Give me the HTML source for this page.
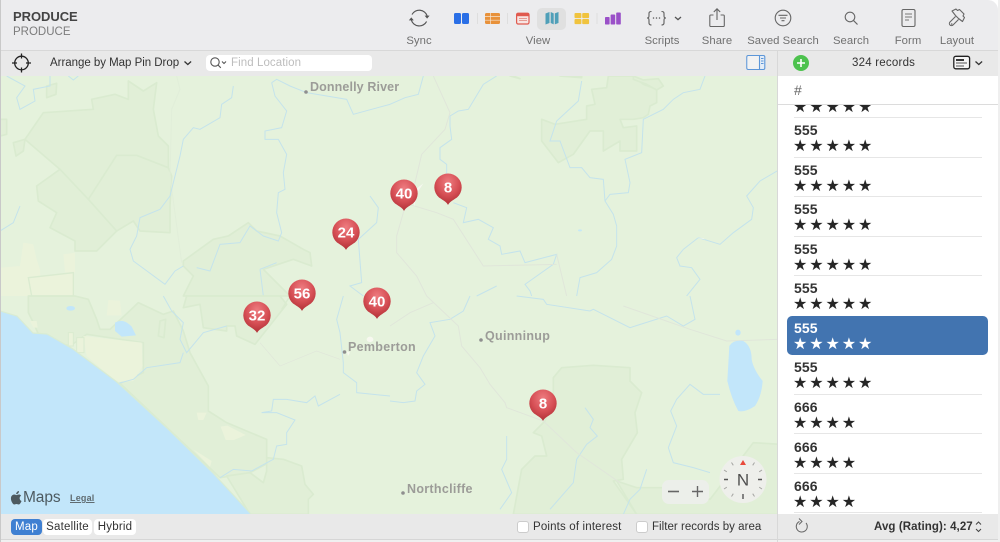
<!DOCTYPE html>
<html><head><meta charset="utf-8">
<style>
html,body{margin:0;padding:0;width:1000px;height:542px;overflow:hidden;background:#fff;font-family:"Liberation Sans",sans-serif}
.a{position:absolute}
.t{position:absolute;white-space:nowrap;line-height:14px}
.lb{font-size:11.3px;color:#707070;letter-spacing:.05px;transform:translateX(-50%);top:34px}
.pl{font-size:12.5px;font-weight:bold;color:#9c9c98;letter-spacing:.3px}
.n{font-size:14px;font-weight:bold;color:#333;left:794px;letter-spacing:.1px}
.s{font-family:"DejaVu Sans",sans-serif;font-size:16px;color:#262626;left:793px;letter-spacing:1.9px;line-height:16px}
.sep{position:absolute;left:794px;width:188px;height:1px;background:#e6e6e6}
.pt{font-size:15px;font-weight:bold;fill:#fff;text-anchor:middle;font-family:"Liberation Sans",sans-serif}
</style></head><body>
<div class="a" style="left:0;top:0;width:998px;height:542px;background:#ececee;border-top-right-radius:10px;overflow:hidden">
<div class="a" style="left:0;top:0;width:1px;height:542px;background:#c9c9c9;z-index:9"></div>
<div class="a" style="left:0;top:50px;width:998px;height:26px;background:#e9e9e9;border-top:1px solid #d8d8d8;box-sizing:border-box"></div>
<div class="a" style="left:0;top:514px;width:998px;height:25px;background:#e9e9e9"></div>
<div class="a" style="left:0;top:539px;width:998px;height:1px;background:#d6d6d6"></div>
<div class="a" style="left:0;top:540px;width:998px;height:2px;background:#f0f0f0"></div>
</div>
<div class="a" style="left:998px;top:0;width:2px;height:542px;background:#efefef"></div>

<div class="t" style="left:13px;top:10px;font-size:13px;font-weight:bold;color:#444;letter-spacing:-.05px">PRODUCE</div>
<div class="t" style="left:13px;top:25px;font-size:11.5px;color:#7c7c7c;letter-spacing:0">PRODUCE</div>

<div class="a" style="left:537px;top:8px;width:29px;height:22px;background:#e0e0e0;border-radius:5px"></div>

<svg class="a" style="left:0;top:0" width="1000" height="76" fill="none">
<!-- sync -->
<path d="M412 14.5A8.3 8.3 0 0 1 427.2 16" stroke="#555" stroke-width="1.2"/>
<path d="M426.6 21.5A8.3 8.3 0 0 1 411.3 20" stroke="#555" stroke-width="1.2"/>
<path d="M424.6 15.6h5l-2.5 3zM408.8 20.4h5l-2.5-3z" fill="#555"/>
<!-- blue -->
<rect x="454" y="13" width="7" height="11" rx="1.5" fill="#2a6fe6"/><rect x="462" y="13" width="7" height="11" rx="1.5" fill="#2a6fe6"/>
<!-- divs -->
<path d="M477.5 13v11M507.5 13v11M597 13v11" stroke="#dedede"/>
<!-- table -->
<rect x="485" y="13" width="15" height="11" rx="1.5" fill="#e8913a"/>
<path d="M485 16.6h15M485 20.2h15M490.5 13v11" stroke="#f6e5d2" stroke-width=".7"/>
<!-- calendar -->
<rect x="516.6" y="13.2" width="12.4" height="10.8" rx="1.5" fill="#f7e4e2" stroke="#e05a4f" stroke-width="1.2"/>
<rect x="516.6" y="13.2" width="12.4" height="3" fill="#e05a4f"/>
<path d="M519 18.5h8M519 20.5h8" stroke="#e59a92" stroke-width=".9"/>
<!-- map -->
<path d="M545.5 13.5l4 -1.5v11l-4 1.5zM550.7 12l3 1.4v11l-3-1.4zM554.8 13.4l3.7-1.4v11l-3.700 1.400z" fill="#4f9fb8"/>
<!-- grid -->
<rect x="574.5" y="13" width="6.9" height="5.100" rx="1" fill="#f0c33e"/><rect x="582.2" y="13" width="6.900" height="5.100" rx="1" fill="#f0c33e"/>
<rect x="574.5" y="19" width="6.9" height="5.100" rx="1" fill="#f0c33e"/><rect x="582.2" y="19" width="6.900" height="5.100" rx="1" fill="#f0c33e"/>
<!-- bars -->
<rect x="605" y="17" width="4.6" height="7.5" rx=".8" fill="#9a50c8"/><rect x="610.6" y="14.5" width="4.6" height="10" rx=".8" fill="#9a50c8"/><rect x="616.2" y="12.5" width="4.6" height="12" rx=".8" fill="#9a50c8"/>
<!-- scripts -->
<path d="M651.5 11.5c-3 0-2.500 1.500-2.500 3.500s0 3-2 3c2 0 2 1 2 3s-.5 4 2.500 4M661.500 11.500c3 0 2.500 1.500 2.500 3.500s0 3 2 3c-2 0-2 1-2 3s.5 4-2.500 4" stroke="#5c5c5c" stroke-width="1.100"/>
<path d="M653.500 18h.01M656.500 18h.01M659.500 18h.01" stroke="#5c5c5c" stroke-width="1.500" stroke-linecap="round"/>
<path d="M675 17l3 2.600 3-2.600" stroke="#555" stroke-width="1.300"/>
<!-- share -->
<path d="M713.500 15h-2.700a1 1 0 0 0-1 1v9.500a1 1 0 0 0 1 1h12.500a1 1 0 0 0 1-1V16a1 1 0 0 0-1-1h-2.700M717 20V9M713.800 12l3.200-3.200 3.200 3.200" stroke="#666" stroke-width="1.100"/>
<!-- saved search -->
<circle cx="783" cy="18" r="7.800" stroke="#666" stroke-width="1.100"/>
<path d="M778.500 15.300h9M780 18h6M781.500 20.700h3" stroke="#666" stroke-width="1.100"/>
<!-- search -->
<circle cx="850" cy="17" r="4.800" stroke="#666" stroke-width="1.100"/>
<path d="M853.500 20.500l4 4" stroke="#666" stroke-width="1.200"/>
<!-- form -->
<rect x="902" y="9.500" width="13" height="17" rx="1.500" stroke="#666" stroke-width="1.100"/>
<path d="M905 14h7M905 17h7M905 20h4" stroke="#777" stroke-width="1"/>
<!-- layout brush -->
<path d="M952 11l4-2 1.500 1.500 2-1 4.500 4.500-1 2 1.500 1.500-2 4-4-3-3-3zM955.500 16.500l-5.500 5.500a2 2 0 0 0 3 3l5.500-5.500" stroke="#666" stroke-width="1.100" stroke-linejoin="round"/>
<circle cx="951.700" cy="24" r=".8" fill="#666"/>
<!-- crosshair -->
<circle cx="21.500" cy="63" r="6.800" stroke="#222" stroke-width="1.300"/>
<path d="M21.500 53.500v5M21.500 67.500v5M12 63h5M26 63h5" stroke="#222" stroke-width="1.300"/>
<!-- arrange chevron -->
<path d="M184.500 61.500l3.300 3 3.300-3" stroke="#333" stroke-width="1.300"/>
<!-- search field -->
<rect x="206" y="55" width="166" height="16" rx="4" fill="#fff"/>
<circle cx="215" cy="62" r="4.200" stroke="#555" stroke-width="1.100"/>
<path d="M218 65l2.800 2.800M222 61.500l2 2 2-2" stroke="#555" stroke-width="1.100"/>
<!-- sidebar toggle -->
<rect x="746.800" y="55.500" width="18" height="14" rx="1.500" fill="#e4edf7" stroke="#5c96d8" stroke-width="1.100"/>
<rect x="747.400" y="56" width="12" height="13" rx="1" fill="#f2f2f2"/>
<path d="M759.500 55.500v14" stroke="#5c96d8" stroke-width="1.100"/>
<path d="M761 58.500h2.500M761 61h2.500M761 63.500h2.500" stroke="#5c96d8"/>
<!-- green plus -->
<circle cx="801" cy="63" r="8" fill="#4dc24e"/>
<path d="M797 63h8M801 59v8" stroke="#fff" stroke-width="1.600"/>
<!-- view icon -->
<rect x="953.800" y="56.300" width="15.800" height="12.500" rx="2" fill="#f6f6f6" stroke="#222" stroke-width="1.300"/>
<path d="M956 60h8" stroke="#222" stroke-width="1.800"/><path d="M956 63h11M956 66h8" stroke="#777" stroke-width="1.300"/>
<path d="M975.500 61.500l3.300 3 3.300-3" stroke="#333" stroke-width="1.300"/>
<path d="M777.500 50v26" stroke="#d8d8d8"/>
</svg>

<div class="t lb" style="left:419px">Sync</div>
<div class="t lb" style="left:538px">View</div>
<div class="t lb" style="left:662px">Scripts</div>
<div class="t lb" style="left:717px">Share</div>
<div class="t lb" style="left:783px">Saved Search</div>
<div class="t lb" style="left:851px">Search</div>
<div class="t lb" style="left:908px">Form</div>
<div class="t lb" style="left:957px">Layout</div>

<div class="t" style="left:50px;top:56px;font-size:11.500px;color:#333;letter-spacing:-.03px">Arrange by Map Pin Drop</div>
<div class="t" style="left:231px;top:56px;font-size:11.500px;color:#bdbdbd;letter-spacing:.08px">Find Location</div>
<div class="t" style="left:852px;top:56px;font-size:11.500px;color:#333;letter-spacing:.22px">324 records</div>

<!-- MAP -->
<svg class="a" style="left:1px;top:76px" width="776" height="438" viewBox="1 76 776 438" fill="none">
<rect x="0" y="76" width="780" height="440" fill="#e5f2dc"/>
<!-- tile 1 -->
<g transform="translate(0,76) scale(.33333)">
<g fill="#e1efd7" stroke="#daebd0" stroke-width="5" stroke-linejoin="round">
<path d="M75 190L130 110 280 100 275 70 345 55 385 70 385 15 430 45 470 20 460 100 475 180 505 210 505 275 515 300 510 390 510 470 420 465 400 435 350 465 290 525 225 525 225 495 150 455 170 410 115 375 110 330 180 280z"/>
<path d="M40 200L75 190 70 225 48 240zM0 130L20 130 20 175 0 180zM140 30L170 22 168 55 140 65z"/>
<path d="M550 570L550 555 640 490 685 480 745 440 770 465 840 480 910 520 930 530 935 570 880 550 790 580 820 610 870 660 550 660 580 600z"/>
</g>
<path d="M180 280L265 370 350 238 410 238 505 275M265 370L350 465" stroke="#daebd0" stroke-width="5"/>
<path d="M515 100L540 40 530 0M515 100L510 300 545 560" stroke="#e1eed9" stroke-width="3"/>
<g fill="#ebf3db">
<path d="M0 575L60 570 70 500 100 505 110 550 120 580 125 660 0 660z"/>
<path d="M190 535L225 530 225 590 195 590z"/>
<path d="M85 605L220 590 220 660 95 660z" stroke="#daebd0" stroke-width="4"/>
</g>
<g stroke="#c4e3ec" stroke-width="3">
<path d="M700 30L695 65 665 85 660 125 600 160 580 155 550 190 540 240 525 300 510 360 480 400 420 425 410 480 390 520 400 555 495 625 525 585 550 570"/>
<path d="M815 20L830 10 870 30 920 50 1040 70 1060 115 1170 85"/>
<path d="M815 20L825 60 860 105 845 155 795 165 795 190 835 190 860 235 850 290 855 340 835 350 830 410 845 470 835 495 790 480 750 450 720 500 660 505 630 585 590 575"/>
<path d="M1110 360L1135 395 1130 440 1075 490 1085 620 1050 630 1090 660"/>
<path d="M60 390L40 440 0 465M20 0L75 30 50 65 60 100 105 75 100 40 150 30 150 0M205 0L220 12 235 0"/>
<path d="M780 580L830 560M780 580L790 660"/>
</g>
</g>
<!-- tile 2 -->
<g transform="translate(390,76) scale(.33333)">
<g fill="#e1efd7" stroke="#daebd0" stroke-width="5" stroke-linejoin="round">
<path d="M455 130L495 145 590 130 590 90 615 85 605 40 650 35 655 0 730 0 760 25 800 40 800 80 780 90 775 115 760 125 730 130 690 130 700 155 740 150 740 225 710 225 690 225 690 195 640 225 640 165 600 165 550 235 505 260 455 195z"/>
<path d="M360 0L390 8 370 0zM510 0L575 5 575 0zM730 0L760 12 805 8 820 30 800 42 770 25 730 10z"/>
</g>
<g stroke="#c4e3ec" stroke-width="3">
<path d="M100 0L85 55 45 65 0 85"/>
<path d="M320 0L280 25 235 100 205 105 180 120 180 150 185 190 150 215 150 250 170 265 170 300"/>
<path d="M190 380L230 395 220 440 265 430 310 455 295 490 330 510 335 535 390 525 405 560 500 535 490 565 405 625 420 645 425 660M320 630L260 660"/>
<path d="M575 15L565 75 500 135 480 195 510 195 540 275 575 275 600 305 640 310 645 375 670 415 680 450 680 510 665 550 620 590 570 605 560 660"/>
<path d="M945 0L930 40 880 50 850 70 820 100 760 130 755 230 705 250 720 320 715 350 660 355 645 375"/>
<path d="M1170 280L1110 315 1070 360 1090 395 1085 430 1030 470 990 505 925 485 880 520 860 545 870 570 905 575 930 610 890 660"/>
</g>
<path d="M130 0L180 110 165 160 95 235 75 320 40 410 20 480 20 530 80 600 110 660M40 380L140 410 190 430 280 570 500 565M500 535L530 660" stroke="#e0e6da" stroke-width="3"/>
<ellipse cx="570" cy="463" rx="6" ry="3" fill="#c6e8f6"/>
<path d="M920 485l25 5-5-3zM100 322L70 345 72 392 85 345z" fill="#f6f8f1"/>
</g>
<!-- tile 3 -->
<g transform="translate(0,296) scale(.33333)">
<g fill="#e1efd7" stroke="#daebd0" stroke-width="5" stroke-linejoin="round">
<path d="M85 0L225 0 265 10 290 70 300 100 330 100 415 20 490 55 520 45 550 105 570 170 625 270 625 345 680 380 800 430 800 485 825 490 750 530 660 545 360 262 430 230 430 140 260 115 210 150 120 125 100 80 85 50z"/>
<path d="M800 485L850 490 905 510 915 565 940 595 925 610 925 655 750 655 680 540 750 530 790 560 800 525z"/>
<path d="M550 35L600 25 610 95 680 105 680 90 705 90 710 120 765 145 860 25 840 0 560 0z"/>
<path d="M480 75L497 70 492 125 475 120z"/>
</g>
<path d="M870 0L845 40" stroke="#daebd0" stroke-width="4"/>
<path d="M250 120L425 140 428 210 400 255 350 258 260 180z" fill="#ebf3db"/>
<path d="M90 75l20 0 3 20-13 0zM325 12l35 2 5 45-45 0zM590 350h30l-10 22-15 0zM662 392l20-3 55 28-35 15-25 0zM580 460l55 35-5 18z" fill="#ebf3db"/>
<path d="M205 110h15v40h-15zM230 125h22v45h-22z" fill="#ebf3db" stroke="#daebd0" stroke-width="3"/>
<path d="M345 80Q370 65 395 92 L408 118 365 122 345 105z" fill="#c2e6fa"/>
<ellipse cx="212" cy="37" rx="13" ry="7" fill="#c2e6fa"/>
<g stroke="#c4e3ec" stroke-width="3">
<path d="M490 0L515 45 550 80 540 130 560 170 610 110 680 90"/>
<path d="M550 170L540 200 440 215 400 250 355 262"/>
<path d="M1030 0L1010 70 1020 110 1030 200 1030 230 1070 260 1070 290 1170 300"/>
<path d="M785 350L815 345 820 310 860 310 920 320 945 300 955 330 1020 295"/>
<path d="M785 350L830 350 885 372 860 410 860 445 830 450 820 490 755 525 700 520 660 545"/>
</g>
<path d="M780 140L840 210 950 165 1020 190" stroke="#e0e6da" stroke-width="2"/>
<ellipse cx="1110" cy="130" rx="10" ry="8" fill="#f7f8f0"/>
<path d="M1040 165l10 5-6 10z" fill="#f7f8f0"/>
</g>
<!-- tile 4 -->
<g transform="translate(390,296) scale(.33333)">
<g fill="#e1efd7" stroke="#daebd0" stroke-width="5" stroke-linejoin="round">
<path d="M490 245L515 215 610 208 720 215 720 255 755 290 735 350 742 410 695 490 700 550 670 555 740 655 370 655 395 520 435 480 470 480 455 420 430 410 465 375 490 310z"/>
<path d="M680 555L740 575 830 575 880 590 960 610 1090 440 1170 445 1170 655 740 655z"/>
</g>
<g stroke="#c4e3ec" stroke-width="3">
<path d="M240 0L220 45 180 70 120 80 135 120 100 180 80 230 105 265 80 285 75 315 40 320 0 315"/>
<path d="M380 0L460 10 470 25 600 45 610 40 720 95 830 60 880 90 915 70 900 0"/>
<path d="M350 420L350 490 335 520 365 590 330 640"/>
<path d="M585 335L610 370 600 395 622 420 590 445 560 490 550 560 480 640"/>
<path d="M990 295L940 295 900 265 860 310 842 345 860 390 835 455 850 500 910 515 960 530"/>
<path d="M770 520L750 580 720 610 700 655"/>
</g>
<path d="M110 0L205 90 215 150 270 215 300 265 345 320 350 335 460 375 560 470 690 560M0 90L60 50 130 20M700 30L900 100 1010 135 1170 130" stroke="#e0e6da" stroke-width="3"/>
<ellipse cx="1044" cy="110" rx="8" ry="9" fill="#c2e6fa"/>
<path d="M1018 150Q1030 130 1060 135 1085 150 1085 190 1090 220 1118 255 1115 300 1095 330 1065 350 1045 345 1025 310 1012 255 1030 200z" fill="#c2e6fa"/>
</g>
<!-- sea -->
<path d="M0 311L17 316 33 333 47 334 73 349 117 382 167 428 213 473 251 514 0 514z" fill="#c2e6fa"/>
<path d="M0 311L17 316 33 333 47 334 73 349 117 382 167 428 213 473 251 514" stroke="#d9ecd3" stroke-width="1.200"/>
<!-- place dots -->
<g fill="#8f8f8f"><circle cx="306" cy="92" r="1.800"/><circle cx="344.500" cy="352" r="1.800"/><circle cx="481" cy="340" r="1.800"/><circle cx="403" cy="493" r="1.800"/></g>
<!-- pins -->
<defs>
<radialGradient id="pg" cx=".5" cy=".28" r=".75"><stop offset="0" stop-color="#ee7c80"/><stop offset=".55" stop-color="#d64f55"/><stop offset="1" stop-color="#ab2c32"/></radialGradient>
</defs>
<g id="pins">
<g transform="translate(404,193)"><path d="M0 18C-1 15.500-4 13.800-9 10.500A13.700 13.700 0 1 1 9 10.500C4 13.800 1 15.500 0 18Z" fill="url(#pg)"/><text class="pt" y="5.500">40</text></g>
<g transform="translate(448,187)"><path d="M0 18C-1 15.500-4 13.800-9 10.500A13.700 13.700 0 1 1 9 10.500C4 13.800 1 15.500 0 18Z" fill="url(#pg)"/><text class="pt" y="5.500">8</text></g>
<g transform="translate(346,232)"><path d="M0 18C-1 15.500-4 13.800-9 10.500A13.700 13.700 0 1 1 9 10.500C4 13.800 1 15.500 0 18Z" fill="url(#pg)"/><text class="pt" y="5.500">24</text></g>
<g transform="translate(302,293)"><path d="M0 18C-1 15.500-4 13.800-9 10.500A13.700 13.700 0 1 1 9 10.500C4 13.800 1 15.500 0 18Z" fill="url(#pg)"/><text class="pt" y="5.500">56</text></g>
<g transform="translate(257,315)"><path d="M0 18C-1 15.500-4 13.800-9 10.500A13.700 13.700 0 1 1 9 10.500C4 13.800 1 15.500 0 18Z" fill="url(#pg)"/><text class="pt" y="5.500">32</text></g>
<g transform="translate(377,301)"><path d="M0 18C-1 15.500-4 13.800-9 10.500A13.700 13.700 0 1 1 9 10.500C4 13.800 1 15.500 0 18Z" fill="url(#pg)"/><text class="pt" y="5.500">40</text></g>
<g transform="translate(543,403)"><path d="M0 18C-1 15.500-4 13.800-9 10.500A13.700 13.700 0 1 1 9 10.500C4 13.800 1 15.500 0 18Z" fill="url(#pg)"/><text class="pt" y="5.500">8</text></g>
</g>
<!-- apple logo -->
<path d="M17.300 492.500c.9-1 1-2 .9-2.800-.9.100-1.900.6-2.500 1.300-.6.700-1 1.600-.9 2.500 1 .1 1.900-.4 2.500-1zM18.200 494c-1.300-.1-2.400.7-3 .7-.7 0-1.600-.7-2.700-.7-1.400 0-2.700.8-3.400 2-1.400 2.500-.4 6.200 1 8.200.7 1 1.500 2.100 2.500 2 1-.1 1.400-.6 2.600-.6s1.500.6 2.600.6 1.800-1 2.400-2c.8-1.100 1.100-2.200 1.100-2.300-1.200-.5-2.300-1.800-2.300-3.400 0-1.400.8-2.600 1.800-3.200-.9-1.200-2-1.300-2.600-1.300z" fill="#4d5a60" transform="translate(11,491) scale(.82) translate(-8.500,-489.700)"/>
<!-- zoom control -->
<rect x="662" y="480" width="47" height="24" rx="7" fill="#ecefea"/>
<path d="M668 491.500h11" stroke="#666" stroke-width="1.600"/>
<path d="M692 491.500h11M697.500 486v11" stroke="#666" stroke-width="1.400"/>
<!-- compass -->
<circle cx="743" cy="479.500" r="23.500" fill="#eeefeb"/>
<path d="M743 460l3 5h-6z" fill="#e8493b"/>
<g stroke="#a5a5a2" stroke-width="1">
<path d="M754.500 462.500l-1.800 2.800M762 470l-2.800 1.800M762 489l-2.800-1.800M754.500 496.500l-1.800-2.800M731.500 496.500l1.800-2.800M724 489l2.800-1.800M724 470l2.800 1.800M731.500 462.500l1.800 2.800"/>
</g>
<path d="M724 479.500h4M758 479.500h4M743 494v5" stroke="#555" stroke-width="1.400"/>
<text x="743" y="485.500" font-family="Liberation Sans" font-size="17" fill="#4f4f4f" text-anchor="middle">N</text>
</svg>
<div class="t pl" style="left:310px;top:80px;letter-spacing:.12px">Donnelly River</div>
<div class="t pl" style="left:348px;top:340px">Pemberton</div>
<div class="t pl" style="left:485px;top:329px">Quinninup</div>
<div class="t pl" style="left:407px;top:482px">Northcliffe</div>
<div class="t" style="left:23px;top:488px;font-size:15.500px;line-height:20px;color:#4d5a60;letter-spacing:-.1px">Maps</div>
<div class="t" style="left:70px;top:491px;font-size:9px;font-weight:bold;color:#5f6b70;text-decoration:underline;letter-spacing:.2px">Legal</div>

<!-- list -->
<div class="a" style="left:778px;top:76px;width:220px;height:438px;background:#fff;overflow:hidden" id="listclip">
<div class="a" style="left:0;top:28px;width:220px;height:1px;background:#dcdcdc"></div>
</div>
<div class="a" style="left:777px;top:76px;width:1px;height:466px;background:#d8d8d8"></div>
<div class="t" style="left:794px;top:83px;font-size:14px;color:#666">#</div>
<div class="a" style="left:778px;top:105px;width:220px;height:408px;overflow:hidden">
  <div class="t s" style="left:15px;top:-6px">★★★★★</div>
</div>
<div class="sep" style="top:117px"></div>
<div class="t n" style="top:123px">555</div><div class="t s" style="top:138px">★★★★★</div><div class="sep" style="top:157px"></div>
<div class="t n" style="top:163px">555</div><div class="t s" style="top:178px">★★★★★</div><div class="sep" style="top:196px"></div>
<div class="t n" style="top:202px">555</div><div class="t s" style="top:217px">★★★★★</div><div class="sep" style="top:236px"></div>
<div class="t n" style="top:242px">555</div><div class="t s" style="top:257px">★★★★★</div><div class="sep" style="top:275px"></div>
<div class="t n" style="top:281px">555</div><div class="t s" style="top:296px">★★★★★</div>
<div class="a" style="left:787px;top:316px;width:201px;height:39px;background:#4274b0;border-radius:5px"></div>
<div class="t n" style="top:321px;color:#fff">555</div><div class="t s" style="top:336px;color:#fff">★★★★★</div>
<div class="t n" style="top:360px">555</div><div class="t s" style="top:375px">★★★★★</div><div class="sep" style="top:394px"></div>
<div class="t n" style="top:400px">666</div><div class="t s" style="top:415px">★★★★</div><div class="sep" style="top:433px"></div>
<div class="t n" style="top:440px">666</div><div class="t s" style="top:455px">★★★★</div><div class="sep" style="top:473px"></div>
<div class="t n" style="top:479px">666</div><div class="t s" style="top:494px">★★★★</div><div class="sep" style="top:512px"></div>

<!-- bottom bar -->
<div class="a" style="left:778px;top:514px;width:220px;height:25px;background:#e9e9e9"></div>
<div class="a" style="left:11px;top:519px;width:31px;height:16px;background:#3f80d2;border-radius:4px;color:#fff;font-size:11.500px;line-height:16px;text-align:center;letter-spacing:.2px">Map</div>
<div class="a" style="left:43px;top:519px;width:49px;height:16px;background:#fff;border-radius:4px;color:#333;font-size:11.500px;line-height:16px;text-align:center;letter-spacing:.2px">Satellite</div>
<div class="a" style="left:94px;top:519px;width:42px;height:16px;background:#fff;border-radius:4px;color:#333;font-size:11.500px;line-height:16px;text-align:center;letter-spacing:.2px">Hybrid</div>
<div class="a" style="left:517px;top:521px;width:12px;height:12px;background:#fff;border:1px solid #ccc;border-radius:3px;box-sizing:border-box"></div>
<div class="t" style="left:533px;top:520px;font-size:11.500px;color:#333;letter-spacing:.16px">Points of interest</div>
<div class="a" style="left:636px;top:521px;width:12px;height:12px;background:#fff;border:1px solid #ccc;border-radius:3px;box-sizing:border-box"></div>
<div class="t" style="left:652px;top:520px;font-size:11.500px;color:#333;letter-spacing:.03px">Filter records by area</div>
<svg class="a" style="left:790px;top:515px" width="200" height="24" fill="none">
<path d="M16 8A5.500 5.500 0 1 1 9.500 6.500" stroke="#666" stroke-width="1"/>
<path d="M9 3.500l3 3-3 3" stroke="#666" stroke-width="1"/>
<path d="M186 9.500l2.500-2.500 2.500 2.500M186 14l2.500 2.500 2.500-2.500" stroke="#444" stroke-width="1"/>
</svg>
<div class="t" style="left:874px;top:520px;font-size:11.500px;font-weight:bold;color:#333;letter-spacing:.08px">Avg (Rating): 4,27</div>
</body></html>
